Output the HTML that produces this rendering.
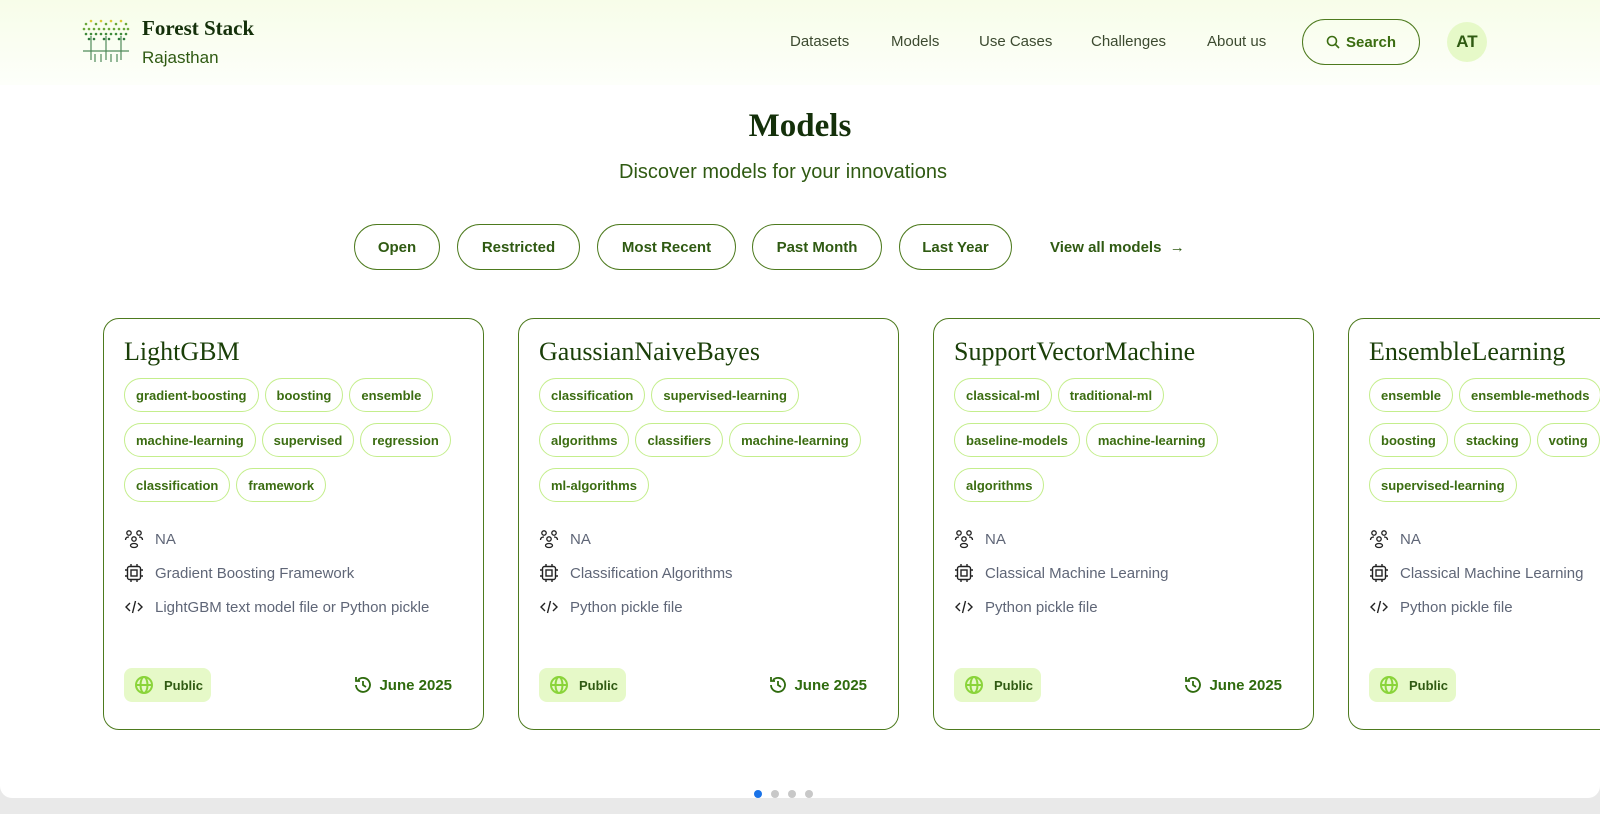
<!DOCTYPE html>
<html><head><meta charset="utf-8"><style>
*{box-sizing:border-box;margin:0;padding:0}
body{width:1600px;height:814px;overflow:hidden;background:#e9e9e9;font-family:"Liberation Sans",sans-serif;}
.page{position:absolute;left:0;top:0;width:1600px;height:798px;background:#fff;border-radius:0 0 12px 12px;overflow:hidden}
.hdr{position:absolute;left:0;top:0;width:1600px;height:85px;background:linear-gradient(#f7fde9,#fdfffa)}
.brand{position:absolute;left:142px;top:16px;font-family:"Liberation Serif",serif;font-weight:bold;font-size:21px;color:#14300a}
.sub{position:absolute;left:142px;top:48px;font-size:17px;color:#2f5a12}
.nav{position:absolute;top:33px;font-size:15px;color:#3c4a30}
.search{position:absolute;left:1302px;top:19px;width:118px;height:46px;border:1.5px solid #4d7a1e;border-radius:23px;color:#3b6d11;font-size:15px;font-weight:bold;display:flex;align-items:center;justify-content:center;gap:6px}
.av{position:absolute;left:1447px;top:22px;width:40px;height:40px;border-radius:50%;background:#e6f9c8;color:#2f5a12;font-weight:bold;font-size:17px;display:flex;align-items:center;justify-content:center}
h1{position:absolute;left:0;width:1600px;top:108px;text-align:center;font-family:"Liberation Serif",serif;font-size:33px;color:#14300a}
.tag2{position:absolute;left:0;width:1566px;top:161px;text-align:center;font-size:20px;color:#2f5a12}
.f{position:absolute;top:224px;height:46px;border:1.5px solid #4d7a1e;border-radius:23px;font-size:15px;color:#2f5a12;display:flex;align-items:center;justify-content:center;font-weight:bold}
.card{position:absolute;top:318px;width:381px;height:412px;border:1.3px solid #4d7a1e;border-radius:16px;background:#fff;padding:0 20px}
.card h2{position:absolute;left:20px;top:18px;font-family:"Liberation Serif",serif;font-weight:normal;font-size:26px;color:#1a3f08;white-space:nowrap}
.tags{position:absolute;left:20px;top:59px;width:345px;display:flex;flex-wrap:wrap;gap:11px 6px}
.t{height:34px;border:1.3px solid #c4ee8c;border-radius:17px;padding:0 11px;font-size:13px;font-weight:bold;color:#3b6d11;display:flex;align-items:center;white-space:nowrap}
.m{position:absolute;left:20px;font-size:15px;color:#5f6677;display:flex;align-items:center;gap:11px;white-space:nowrap}
.m svg{flex:none}
.pub{position:absolute;left:20px;top:349px;width:87px;height:34px;background:#e6f9c8;border-radius:8px;font-size:13px;font-weight:bold;color:#2f5a12;display:flex;align-items:center;gap:10px;padding-left:10px}
.dt{position:absolute;right:31px;top:356px;font-size:15px;font-weight:bold;color:#2f6b0e;display:flex;align-items:center;gap:6px}
.dots{position:absolute;left:754px;top:790px;display:flex;gap:9px}
.dots i{width:8px;height:8px;border-radius:50%;background:#c8c8c8}
</style></head><body><div class="page">
<svg width="0" height="0" style="position:absolute"><defs>
<symbol id="ppl" viewBox="0 0 20 20"><g fill="none" stroke="#222" stroke-width="1.3"><circle cx="5" cy="4" r="2.2"/><circle cx="15" cy="4" r="2.2"/><circle cx="10" cy="10" r="2.2"/><path d="M1.5 11c0-2 1.5-3 3.5-3M18.5 11c0-2-1.5-3-3.5-3"/><ellipse cx="10" cy="16.5" rx="3.5" ry="2"/></g></symbol>
<symbol id="cpu" viewBox="0 0 20 20"><g fill="none" stroke="#222" stroke-width="1.4"><rect x="3.5" y="3.5" width="13" height="13" rx="2"/><rect x="7" y="7" width="6" height="6"/><path d="M7 1v2.5M13 1v2.5M7 16.5V19M13 16.5V19M1 7h2.5M1 13h2.5M16.5 7H19M16.5 13H19"/></g></symbol>
<symbol id="code" viewBox="0 0 20 20"><g fill="none" stroke="#222" stroke-width="1.4"><path d="M6 6l-4 4 4 4M14 6l4 4-4 4M11.5 4l-3 12"/></g></symbol>
<symbol id="glb" viewBox="0 0 20 20"><g fill="none" stroke="#8ad43a" stroke-width="2"><circle cx="10" cy="10" r="8"/><ellipse cx="10" cy="10" rx="3.5" ry="8"/><path d="M2 10h16"/></g></symbol>
<symbol id="hist" viewBox="0 0 20 20"><g fill="none" stroke="#2f6b0e" stroke-width="1.8"><path d="M3 10a7 7 0 1 0 2-5M3 2v4h4"/><path d="M10 6v4l3 2"/></g></symbol>
</defs></svg>
<div class="hdr">
<svg style="position:absolute;left:81px;top:16px" width="50" height="50" viewBox="0 0 50 50">
<g fill="#6aa83a"><circle cx="5" cy="8" r="1.3"/><circle cx="10" cy="5" r="1.3" fill="#d8c83a"/><circle cx="15" cy="8" r="1.3"/><circle cx="20" cy="5" r="1.3" fill="#d8c83a"/><circle cx="25" cy="8" r="1.3"/><circle cx="30" cy="5" r="1.3" fill="#d8c83a"/><circle cx="35" cy="8" r="1.3"/><circle cx="40" cy="5" r="1.3" fill="#d8c83a"/><circle cx="45" cy="8" r="1.3"/>
<circle cx="3" cy="13" r="1.3"/><circle cx="8" cy="13" r="1.3"/><circle cx="13" cy="13" r="1.3"/><circle cx="18" cy="13" r="1.3"/><circle cx="23" cy="13" r="1.3"/><circle cx="28" cy="13" r="1.3"/><circle cx="33" cy="13" r="1.3"/><circle cx="38" cy="13" r="1.3"/><circle cx="43" cy="13" r="1.3"/><circle cx="47" cy="13" r="1.3"/>
<circle cx="5" cy="18" r="1.3" fill="#3f8a3a"/><circle cx="10" cy="18" r="1.3" fill="#3f8a3a"/><circle cx="15" cy="18" r="1.3" fill="#3f8a3a"/><circle cx="20" cy="18" r="1.3" fill="#3f8a3a"/><circle cx="25" cy="18" r="1.3" fill="#3f8a3a"/><circle cx="30" cy="18" r="1.3" fill="#3f8a3a"/><circle cx="35" cy="18" r="1.3" fill="#3f8a3a"/><circle cx="40" cy="18" r="1.3" fill="#3f8a3a"/><circle cx="45" cy="18" r="1.3" fill="#3f8a3a"/>
<circle cx="8" cy="23" r="1.3" fill="#2f7a3a"/><circle cx="13" cy="23" r="1.3" fill="#2f7a3a"/><circle cx="23" cy="23" r="1.3" fill="#2f7a3a"/><circle cx="28" cy="23" r="1.3" fill="#2f7a3a"/><circle cx="38" cy="23" r="1.3" fill="#2f7a3a"/><circle cx="43" cy="23" r="1.3" fill="#2f7a3a"/></g>
<path d="M10 20V44M25 20V44M40 20V44M2 35H48M14 38v8M20 38v8M30 38v8M36 38v8" stroke="#4f8a5a" stroke-width="1.2"/></svg>
<div class="brand">Forest Stack</div><div class="sub">Rajasthan</div>
<div class="nav" style="left:790px">Datasets</div><div class="nav" style="left:891px">Models</div><div class="nav" style="left:979px">Use Cases</div><div class="nav" style="left:1091px">Challenges</div><div class="nav" style="left:1207px">About us</div>
<div class="search"><svg width="14" height="14" viewBox="0 0 14 14" fill="none" stroke="#3b6d11" stroke-width="1.6"><circle cx="6" cy="6" r="4.5"/><path d="M9.5 9.5L13 13"/></svg>Search</div>
<div class="av">AT</div>
</div>
<h1>Models</h1>
<div class="tag2">Discover models for your innovations</div>
<div class="f" style="left:354px;width:86px">Open</div>
<div class="f" style="left:457px;width:123px">Restricted</div>
<div class="f" style="left:597px;width:139px">Most Recent</div>
<div class="f" style="left:752px;width:130px">Past Month</div>
<div class="f" style="left:899px;width:113px">Last Year</div>
<div class="f" style="left:1050px;width:140px;border:none;justify-content:flex-start">View all models&nbsp;&nbsp;→</div>

<div class="card" style="left:103px"><h2>LightGBM</h2><div class="tags"><span class="t">gradient-boosting</span><span class="t">boosting</span><span class="t">ensemble</span><span class="t">machine-learning</span><span class="t">supervised</span><span class="t">regression</span><span class="t">classification</span><span class="t">framework</span></div>
<div class="m" style="top:210px"><svg width="20" height="20"><use href="#ppl"/></svg>NA</div><div class="m" style="top:244px"><svg width="20" height="20"><use href="#cpu"/></svg>Gradient Boosting Framework</div><div class="m" style="top:278px"><svg width="20" height="20"><use href="#code"/></svg>LightGBM text model file or Python pickle</div>
<div class="pub"><svg width="20" height="20"><use href="#glb"/></svg>Public</div><div class="dt"><svg width="20" height="20"><use href="#hist"/></svg>June 2025</div></div>

<div class="card" style="left:518px"><h2>GaussianNaiveBayes</h2><div class="tags"><span class="t">classification</span><span class="t">supervised-learning</span><span class="t">algorithms</span><span class="t">classifiers</span><span class="t">machine-learning</span><span class="t">ml-algorithms</span></div>
<div class="m" style="top:210px"><svg width="20" height="20"><use href="#ppl"/></svg>NA</div><div class="m" style="top:244px"><svg width="20" height="20"><use href="#cpu"/></svg>Classification Algorithms</div><div class="m" style="top:278px"><svg width="20" height="20"><use href="#code"/></svg>Python pickle file</div>
<div class="pub"><svg width="20" height="20"><use href="#glb"/></svg>Public</div><div class="dt"><svg width="20" height="20"><use href="#hist"/></svg>June 2025</div></div>

<div class="card" style="left:933px"><h2>SupportVectorMachine</h2><div class="tags" style="width:300px"><span class="t">classical-ml</span><span class="t">traditional-ml</span><span class="t">baseline-models</span><span class="t">machine-learning</span><span class="t">algorithms</span></div>
<div class="m" style="top:210px"><svg width="20" height="20"><use href="#ppl"/></svg>NA</div><div class="m" style="top:244px"><svg width="20" height="20"><use href="#cpu"/></svg>Classical Machine Learning</div><div class="m" style="top:278px"><svg width="20" height="20"><use href="#code"/></svg>Python pickle file</div>
<div class="pub"><svg width="20" height="20"><use href="#glb"/></svg>Public</div><div class="dt"><svg width="20" height="20"><use href="#hist"/></svg>June 2025</div></div>

<div class="card" style="left:1348px;overflow:hidden"><h2>EnsembleLearning</h2><div class="tags" style="width:300px"><span class="t">ensemble</span><span class="t">ensemble-methods</span><span class="t">boosting</span><span class="t">stacking</span><span class="t">voting</span><span class="t">supervised-learning</span></div>
<div class="m" style="top:210px"><svg width="20" height="20"><use href="#ppl"/></svg>NA</div><div class="m" style="top:244px"><svg width="20" height="20"><use href="#cpu"/></svg>Classical Machine Learning</div><div class="m" style="top:278px"><svg width="20" height="20"><use href="#code"/></svg>Python pickle file</div>
<div class="pub"><svg width="20" height="20"><use href="#glb"/></svg>Public</div></div>
<div class="dots"><i style="background:#1a73e8"></i><i></i><i></i><i></i></div>
</div></body></html>
